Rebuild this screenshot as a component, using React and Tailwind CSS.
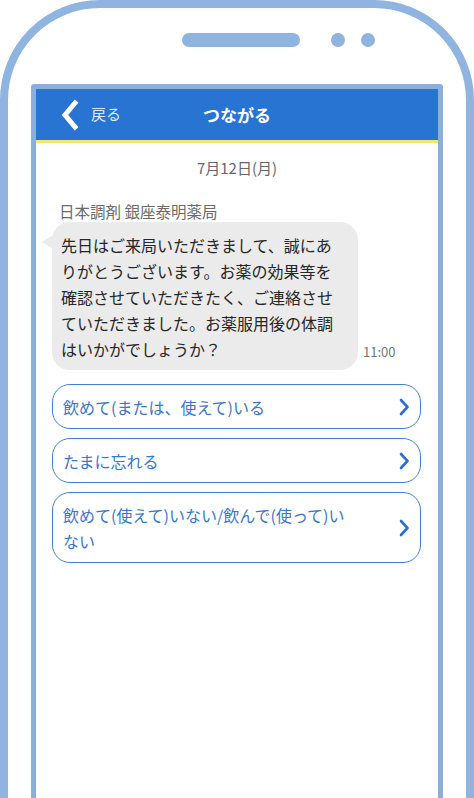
import React from "react";

const font = { fontFamily: '"Noto Sans CJK JP", "Noto Sans", sans-serif' };

function Chevron({ className }) {
  return (
    <svg className={className} viewBox="0 0 12 20" fill="none">
      <path d="M3 3 L9.5 10 L3 17" stroke="currentColor" strokeWidth="2.6" strokeLinecap="round" strokeLinejoin="round" />
    </svg>
  );
}

function Choice({ children, tall }) {
  return (
    <div className={`flex items-center justify-between rounded-[18px] border-[1.5px] border-[#3f7fd6] pl-[10px] pr-[10px] ${tall ? "h-[71px]" : "h-[45px]"}`}>
      <div className="text-[16px] leading-[26px] text-[#3a76c8]">{children}</div>
      <Chevron className="w-[12px] h-[20px] text-[#2a6fd0]" />
    </div>
  );
}

export default function App() {
  return (
    <div className="w-[474px] h-[798px] overflow-hidden bg-white" style={font}>
      <div className="h-[900px] border-[8px] border-[#8fb4df] rounded-t-[100px] bg-white">
        <div className="flex items-center mt-[25px] ml-[174px] h-[14px]">
          <div className="w-[118px] h-[14px] rounded-full bg-[#8fb4df]" />
          <div className="w-[14px] h-[14px] rounded-full bg-[#8fb4df] ml-[31px]" />
          <div className="w-[14px] h-[14px] rounded-full bg-[#8fb4df] ml-[16px]" />
        </div>
        <div className="mt-[37px] mx-[23px] h-[760px] border-[5px] border-[#8aafd9] rounded-t-[3px] bg-white">
          <div className="relative h-[51px] bg-[#2874d3] flex items-center justify-center">
            <div className="absolute left-[24px] top-0 h-[51px] flex items-center">
              <svg width="20" height="32" viewBox="0 0 20 32" fill="none">
                <path d="M15 4 L5 16 L15 28" stroke="white" strokeWidth="5" strokeLinecap="square" strokeLinejoin="miter" />
              </svg>
              <span className="ml-[11px] text-[15px] text-[#dfe8f5]">戻る</span>
            </div>
            <span className="text-[17px] font-bold text-white">つながる</span>
          </div>
          <div className="h-[3px] bg-[#f2e96b]" />
          <div className="pt-[15px] text-center text-[15px] leading-[20px] text-[#666]">7月12日(月)</div>
          <div className="mt-[23px] ml-[23px] text-[15.5px] leading-[20px] text-[#6b6b6b]">日本調剤 銀座泰明薬局</div>
          <div className="mt-[1px] ml-[16px] flex items-end">
            <div className="relative w-[306px] rounded-[18px] bg-[#ebebeb] pl-[9px] pt-[10px] pb-[8px]">
              <div className="absolute left-[-10px] top-[13px] w-0 h-0 border-t-[7px] border-t-transparent border-b-[7px] border-b-transparent border-r-[11px] border-r-[#ebebeb]" />
              <div className="text-[16px] leading-[26px] text-[#262626] whitespace-nowrap">
                先日はご来局いただきまして、誠にあ<br />
                りがとうございます。お薬の効果等を<br />
                確認させていただきたく、ご連絡させ<br />
                ていただきました。お薬服用後の体調<br />
                はいかがでしょうか？
              </div>
            </div>
            <div className="ml-[5px] mb-[9px] text-[13px] leading-[18px] text-[#777]">11:00</div>
          </div>
          <div className="mt-[14px] ml-[16px] mr-[17px] flex flex-col gap-[9px]">
            <Choice>飲めて(または、使えて)いる</Choice>
            <Choice>たまに忘れる</Choice>
            <Choice tall>
              飲めて(使えて)いない/飲んで(使って)い<br />ない
            </Choice>
          </div>
        </div>
      </div>
    </div>
  );
}
